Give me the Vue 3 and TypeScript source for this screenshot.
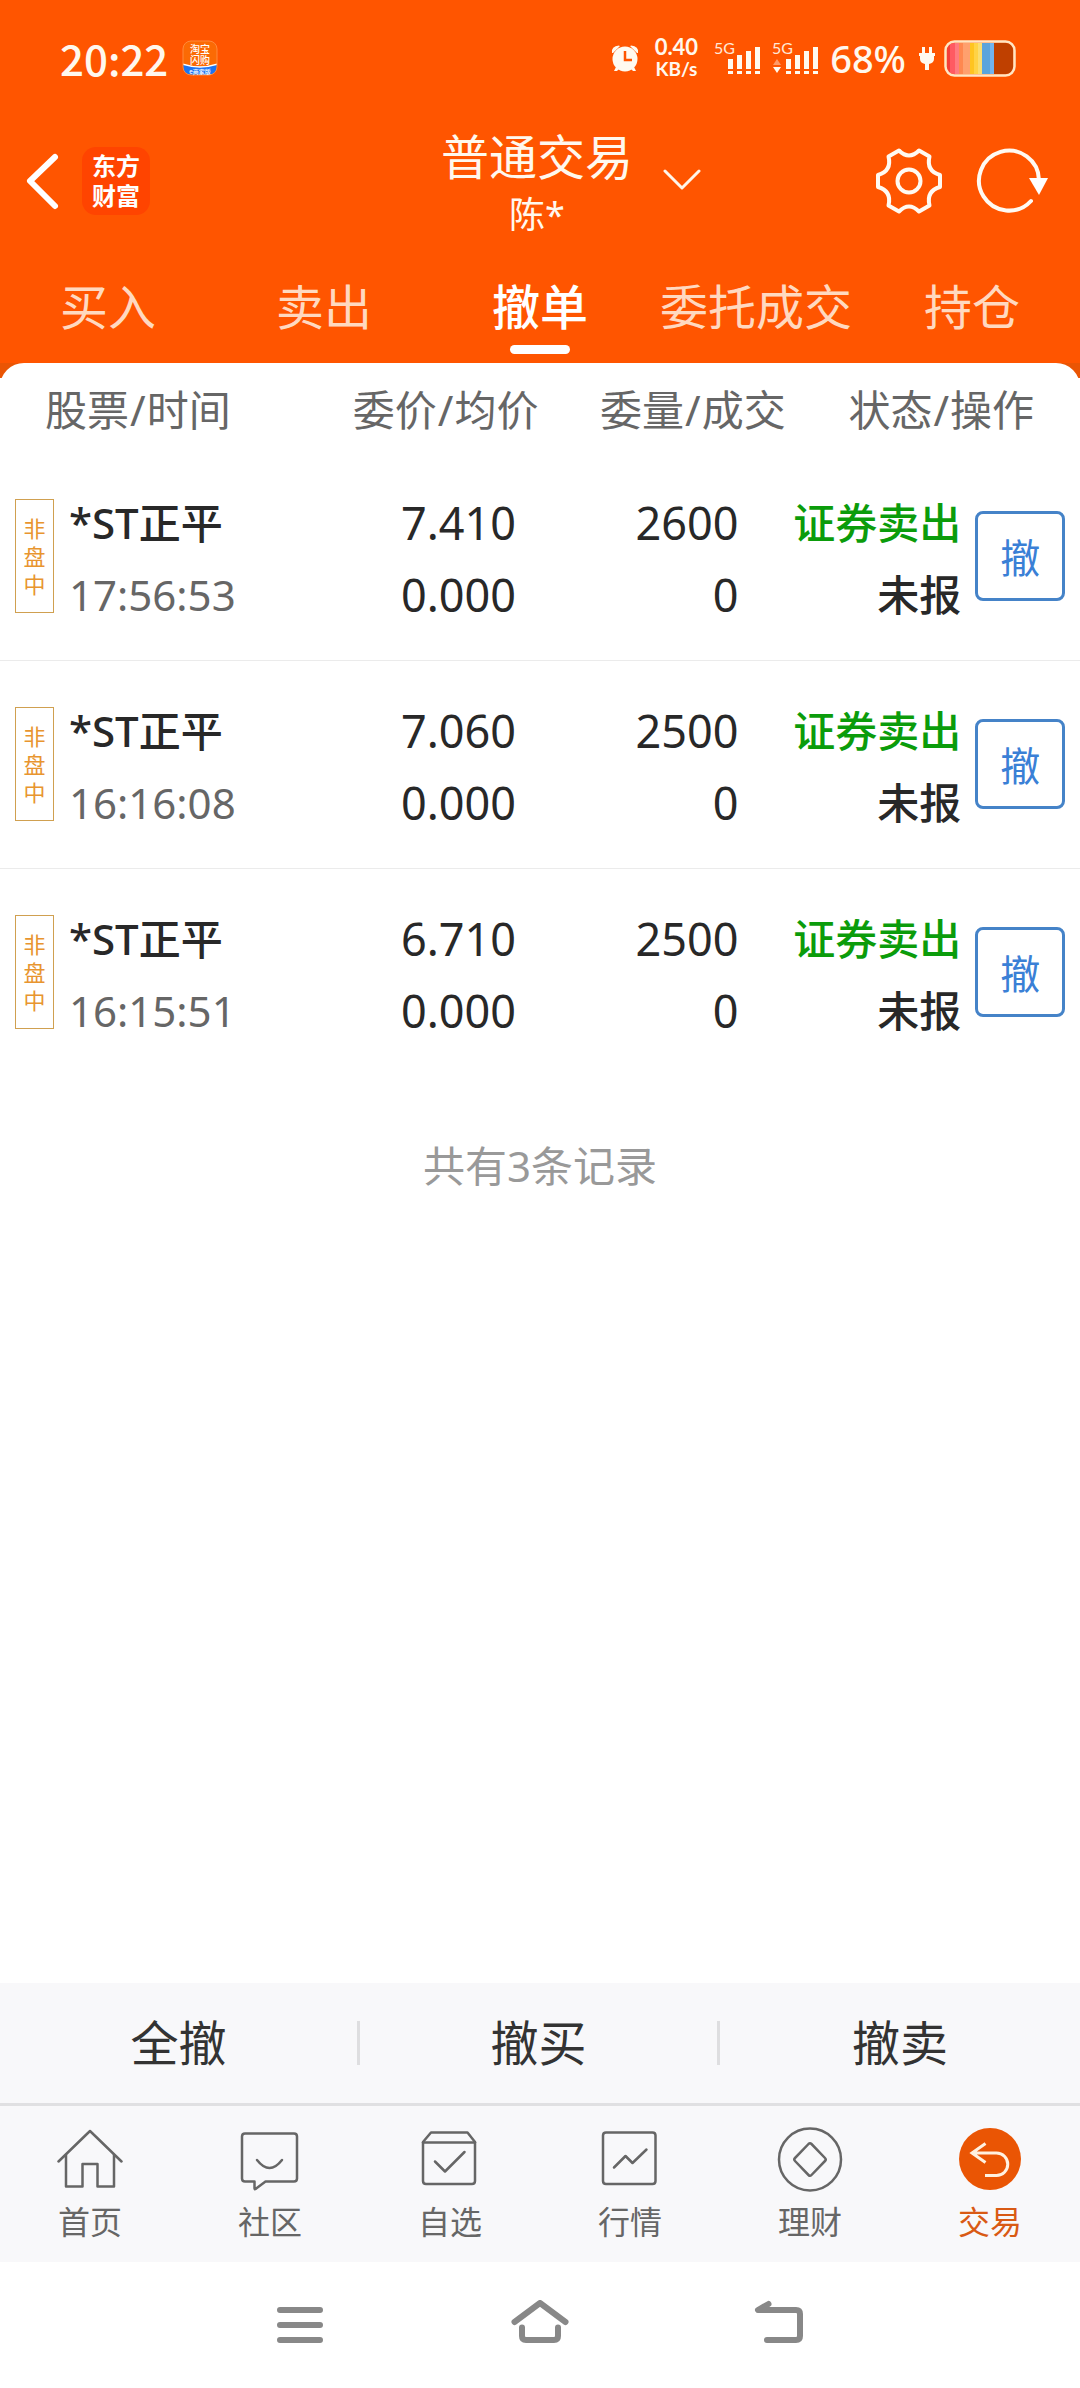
<script setup lang="ts">
import { ref } from 'vue'

interface Order {
  name: string
  time: string
  price: string
  avgPrice: string
  amount: string
  filled: string
  side: string
  status: string
}

const tabs: string[] = ['买入', '卖出', '撤单', '委托成交', '持仓']
const activeTab = ref<string>('撤单')

const columns: string[][] = [
  ['股票', '时间'],
  ['委价', '均价'],
  ['委量', '成交'],
  ['状态', '操作'],
]

const orders: Order[] = [
  { name: '*ST正平', time: '17:56:53', price: '7.410', avgPrice: '0.000', amount: '2600', filled: '0', side: '证券卖出', status: '未报' },
  { name: '*ST正平', time: '16:16:08', price: '7.060', avgPrice: '0.000', amount: '2500', filled: '0', side: '证券卖出', status: '未报' },
  { name: '*ST正平', time: '16:15:51', price: '6.710', avgPrice: '0.000', amount: '2500', filled: '0', side: '证券卖出', status: '未报' },
]

const actions: string[] = ['全撤', '撤买', '撤卖']

interface NavItem {
  label: string
  paths: string[]
}

const navItems: NavItem[] = [
  { label: '首页', paths: ['M1.5 35.5L33 5l31.5 30.5', 'M9 29v31.5h16.5V38h15v22.5H57V29'] },
  {
    label: '社区',
    paths: [
      'M8 7.5h49q3 0 3 3v42q0 3-3 3H28.500l-10 7.500q-1 .5-1-1V55.500H8q-3 0-3-3v-42q0-3 3-3z',
      'M20 34q12.500 16 25 0',
    ],
  },
  {
    label: '自选',
    paths: [
      'M6 16l8-9.500h36.500L58 16v39q0 3-3 3H9q-3 0-3-3z',
      'M6 16.500h52',
      'M18 35.500l10 10L47.500 26',
    ],
  },
  {
    label: '行情',
    paths: ['M9 6.500h46.500q3 0 3 3V55q0 3-3 3H9q-3 0-3-3V9.500q0-3 3-3z', 'M17 41.500L28.500 30l7 7L49.500 23.500'],
  },
  {
    label: '理财',
    paths: [
      'M33 2.500a31 31 0 1 1 0 62a31 31 0 1 1 0-62z',
      'M31.500 18q1.500-1.500 3 0l13.500 14q1.500 1.500 0 3l-13.500 14q-1.500 1.500-3 0L18 35q-1.500-1.500 0-3z',
    ],
  },
]

const bars: number[][] = [
  [14, 19],
  [23, 15],
  [32, 11],
  [41, 7],
]
</script>

<template>
  <div class="app">
    <header class="top">
      <div class="status-bar">
        <span class="clock">20:22</span>
        <svg class="app-badge" width="36" height="36" viewBox="0 0 36 36" aria-hidden="true">
          <defs>
            <clipPath id="badgeClip"><rect x="1" y="1" width="34" height="34" rx="8" /></clipPath>
          </defs>
          <g clip-path="url(#badgeClip)">
            <rect width="36" height="36" fill="#fb6a04" />
            <path d="M0 24q18 6 36 0v12H0z" fill="#1f74f0" />
            <path d="M0 24q18 6 36 0" fill="none" stroke="#fff" stroke-width="1.500" />
          </g>
          <rect x="1" y="1" width="34" height="34" rx="8" fill="none" stroke="#ff8a3c" stroke-width="1" />
          <text x="18" y="13" font-size="10" font-weight="500" fill="#fff" text-anchor="middle">淘宝</text>
          <text x="18" y="24" font-size="10" font-weight="500" fill="#fff" text-anchor="middle">闪购</text>
          <text x="18" y="34" font-size="6" font-weight="500" fill="#fff" text-anchor="middle">e商家版</text>
        </svg>
        <div class="status-right">
          <svg width="28" height="28" viewBox="0 0 28 28" aria-hidden="true">
            <g fill="#fffaf0">
              <circle cx="14" cy="15" r="12.500" />
              <path d="M1 9Q0 2 8 1.500q1 .5.500 1L2 9z" />
              <path d="M27 9q1-7-7-7.500-1 .5-.5 1L26 9z" />
              <path d="M5 23l-2 4h3l2-2zM23 23l2 4h-3l-2-2z" />
            </g>
            <path d="M14 7v9h7" fill="none" stroke="#ff5500" stroke-width="2.500" />
          </svg>
          <div class="speed">
            <span class="speed-num">0.40</span>
            <span class="speed-unit">KB/s</span>
          </div>
          <svg v-for="n in 2" :key="n" class="signal" width="46" height="36" viewBox="0 0 46 36" aria-hidden="true">
            <text x="0" y="14" font-size="16" fill="#ffe9d8">5G</text>
            <g fill="#fffaf0">
              <template v-for="bar in bars" :key="bar[0]">
                <rect :x="bar[0]" :y="bar[1]" width="5" :height="29 - bar[1]" />
                <rect :x="bar[0]" y="31" width="5" height="3" />
              </template>
            </g>
            <template v-if="n === 2">
              <path d="M1 25l4-6 4 6z" fill="#ff9a66" />
              <path d="M1 27l4 6 4-6z" fill="#fffaf0" />
            </template>
          </svg>
          <span class="percent">68%</span>
          <svg width="18" height="24" viewBox="0 0 18 24" aria-hidden="true">
            <path d="M4 1h3v6h4V1h3v6h3v3h-1v3q0 4-5 5v6H7v-6q-5-1-5-5v-3H1V7h3z" fill="#fffaf0" />
          </svg>
          <svg class="battery" width="72" height="37" viewBox="0 0 72 37" aria-hidden="true">
            <defs>
              <clipPath id="cellClip"><rect x="3" y="3" width="66" height="31" rx="7" /></clipPath>
            </defs>
            <g clip-path="url(#cellClip)">
              <rect x="2" y="2" width="5" height="33" fill="#f43e3a" />
              <rect x="6" y="2" width="5" height="33" fill="#ff5a62" />
              <rect x="11" y="2" width="4" height="33" fill="#ff7b80" />
              <rect x="15" y="2" width="4" height="33" fill="#ff8850" />
              <rect x="19" y="2" width="7" height="33" fill="#ffa06e" />
              <rect x="26" y="2" width="4" height="33" fill="#ffc420" />
              <rect x="30" y="2" width="4" height="33" fill="#ffd345" />
              <rect x="34" y="2" width="4" height="33" fill="#fade70" />
              <rect x="38" y="2" width="8" height="33" fill="#5aa4dc" />
              <rect x="46" y="2" width="4" height="33" fill="#72b4ee" />
              <rect x="50" y="2" width="20" height="33" fill="#bf4000" />
            </g>
            <rect x="1.500" y="1.500" width="69" height="34" rx="9" fill="none" stroke="#ffe6c4" stroke-width="2.500" />
          </svg>
        </div>
      </div>

      <div class="title-bar">
        <div class="title-left">
          <button class="icon-btn" type="button" aria-label="返回">
            <svg width="36" height="60" viewBox="0 0 36 60" fill="none" stroke="#fff" stroke-width="6" stroke-linecap="round" stroke-linejoin="round">
              <path d="M31 6L6 30l25 25" />
            </svg>
          </button>
          <div class="brand"><span>东方</span><span>财富</span></div>
        </div>
        <button class="account" type="button">
          <span class="account-text">
            <span class="account-type">普通交易</span>
            <span class="account-name">陈*</span>
          </span>
          <svg class="caret" width="38" height="22" viewBox="0 0 38 22" fill="none" stroke="#fff6ea" stroke-width="3" stroke-linecap="round" stroke-linejoin="round">
            <path d="M2 2l17 17L36 2" />
          </svg>
        </button>
        <div class="title-right">
          <button class="icon-btn" type="button" aria-label="设置">
            <svg width="70" height="70" viewBox="-35 -35 70 70" fill="none" stroke="#fffaf2" stroke-width="4" stroke-linejoin="round">
              <path d="M-10 -30.500Q0 -20.500 10 -30.500L20.500 -24.500Q17 -10 31 -6V6Q17 10 20.500 24.500L10 30.500Q0 20.500 -10 30.500L-20.500 24.500Q-17 10 -31 6V-6Q-17 -10 -20.500 -24.500Z" />
              <circle r="11.500" />
            </svg>
          </button>
          <button class="icon-btn" type="button" aria-label="刷新">
            <svg width="74" height="70" viewBox="-33 -35 74 70" fill="none" stroke="#fffaf2" stroke-width="4" stroke-linecap="round">
              <path d="M22 20A30 30 0 1 1 30 -1" />
              <path d="M20 -3h19L30 14z" fill="#fff" stroke="none" />
            </svg>
          </button>
        </div>
      </div>

      <nav class="tabs">
        <button v-for="tab in tabs" :key="tab" type="button" class="tab" :class="{ active: tab === activeTab }" @click="activeTab = tab">
          {{ tab }}
        </button>
      </nav>
    </header>

    <main class="content">
      <div class="sheet">
        <table class="orders">
          <colgroup>
            <col class="col-stock" />
            <col class="col-price" />
            <col class="col-amount" />
            <col class="col-status" />
            <col class="col-action" />
          </colgroup>
          <thead>
            <tr>
              <th v-for="(col, i) in columns" :key="i" scope="col" :colspan="i === 3 ? 2 : 1">
                {{ col[0] }}<span class="slash">/</span>{{ col[1] }}
              </th>
            </tr>
          </thead>
          <tbody>
            <tr v-for="order in orders" :key="order.time">
              <td>
                <div class="stock">
                  <span class="flag">非盘中</span>
                  <div class="lines left">
                    <span>{{ order.name }}</span>
                    <span class="time">{{ order.time }}</span>
                  </div>
                </div>
              </td>
              <td class="price">
                <div class="lines num"><span>{{ order.price }}</span><span>{{ order.avgPrice }}</span></div>
              </td>
              <td class="amount">
                <div class="lines num"><span>{{ order.amount }}</span><span>{{ order.filled }}</span></div>
              </td>
              <td>
                <div class="lines"><span class="sell">{{ order.side }}</span><span>{{ order.status }}</span></div>
              </td>
              <td class="action"><button class="cancel" type="button">撤</button></td>
            </tr>
          </tbody>
        </table>
        <p class="summary">共有3条记录</p>
      </div>
    </main>

    <footer>
      <div class="actions">
        <button v-for="action in actions" :key="action" type="button">{{ action }}</button>
      </div>
      <nav class="bottom-nav">
        <a v-for="item in navItems" :key="item.label" href="#">
          <svg width="66" height="66" viewBox="0 0 66 66" fill="none" stroke="#666" stroke-width="2.500" stroke-linecap="round" stroke-linejoin="round">
            <path v-for="d in item.paths" :key="d" :d="d" />
          </svg>
          <span>{{ item.label }}</span>
        </a>
        <a href="#" class="current">
          <svg width="66" height="66" viewBox="0 0 66 66" fill="none" stroke="#fff1e0" stroke-width="3">
            <circle cx="33" cy="33" r="31" fill="#ea5504" stroke="none" />
            <path d="M28.500 17.500L15 27l13.500 9.500M15 27h24.500a11 11 0 0 1 0 22.500H28" />
          </svg>
          <span>交易</span>
        </a>
      </nav>
      <div class="system-nav">
        <button type="button" aria-label="最近任务">
          <svg width="60" height="50" viewBox="0 0 60 50" stroke="#888" stroke-width="6" stroke-linecap="round">
            <path d="M10 10h40M10 25h40M10 40h40" />
          </svg>
        </button>
        <button type="button" aria-label="主屏幕">
          <svg width="60" height="50" viewBox="0 0 60 50" fill="none" stroke="#888" stroke-width="6" stroke-linecap="round" stroke-linejoin="round">
            <path d="M4.500 22L30 3l25.500 19M12 27.500V36q0 4 4 4h28q4 0 4-4v-8.500" />
          </svg>
        </button>
        <button type="button" aria-label="返回上一级">
          <svg width="60" height="50" viewBox="0 0 60 50" fill="none" stroke="#888" stroke-width="6" stroke-linecap="round" stroke-linejoin="round">
            <path d="M18.500 4L8 10h38q4 0 4 4v22q0 4-4 4H17" />
          </svg>
        </button>
      </div>
    </footer>
  </div>
</template>

<style>
body {
  background: #fff;
}
</style>

<style scoped>
.app {
  display: flex;
  flex-direction: column;
  min-height: 100vh;
  background: #fff;
  color: #282828;
  font-family: 'Noto Sans', 'Noto Sans CJK SC', sans-serif;
  font-size: 42px;
}

button {
  padding: 0;
  border: 0;
  background: none;
  color: inherit;
  font: inherit;
  cursor: pointer;
}

svg {
  display: block;
  flex: none;
}

.top {
  background: #ff5500;
  color: #fff8ee;
}

.status-bar {
  display: flex;
  align-items: center;
  box-sizing: border-box;
  height: 118px;
  padding: 0 64px 2px 60px;
}

.clock {
  font-family: 'Noto Sans CJK SC', sans-serif;
  font-weight: 500;
  font-size: 42px;
  line-height: 60px;
}

.app-badge {
  margin-left: 14px;
  font-family: 'Noto Sans CJK SC', sans-serif;
}

.signal {
  overflow: visible;
  font-family: Lato, sans-serif;
}

.status-right {
  display: flex;
  align-items: center;
  gap: 12px;
  margin-left: auto;
}

.speed {
  display: flex;
  flex-direction: column;
  align-items: center;
  margin: 0 4px;
  font-family: Lato, sans-serif;
  font-weight: 700;
  line-height: 22px;
}

.speed-num {
  font-size: 22px;
}

.speed-unit {
  font-size: 19px;
}

.percent {
  font-size: 38px;
  font-weight: 500;
  line-height: 60px;
}

.battery {
  margin-left: -4px;
}

.title-bar {
  display: grid;
  grid-template-columns: 1fr auto 1fr;
  align-items: center;
  height: 126px;
  padding: 0 30px 0 24px;
}

.title-left {
  display: flex;
  align-items: center;
  gap: 22px;
}

.brand {
  display: flex;
  flex-direction: column;
  padding: 4px 10px;
  border-radius: 14px;
  background: #ff4400;
  color: #fff;
  font-size: 24px;
  font-weight: 700;
  line-height: 30px;
}

.account {
  position: relative;
}

.account-text {
  display: flex;
  flex-direction: column;
  align-items: center;
}

.account-type {
  font-size: 48px;
  line-height: 68px;
}

.account-name {
  font-size: 36px;
  line-height: 48px;
}

.caret {
  position: absolute;
  left: 100%;
  top: 46px;
  margin-left: 30px;
}

.title-right {
  display: flex;
  justify-content: flex-end;
  gap: 32px;
}

.tabs {
  display: grid;
  grid-template-columns: repeat(5, 1fr);
  height: 119px;
}

.tab {
  display: flex;
  flex-direction: column;
  align-items: center;
  justify-content: flex-end;
  gap: 5px;
  padding-bottom: 9px;
  color: #ffd9c0;
  font-size: 48px;
  line-height: 66px;
}

.tab::after {
  content: '';
  width: 60px;
  height: 9px;
  border-radius: 5px;
}

.tab.active {
  color: #fff;
  font-weight: 500;
}

.tab.active::after {
  background: #fff;
}

.content {
  flex: 1;
  background: linear-gradient(#ea5504 15px, #fff 15px);
}

.sheet {
  border-radius: 24px 24px 0 0;
  background: #fff;
}

.orders {
  width: 100%;
  table-layout: fixed;
  border-collapse: collapse;
}

.col-stock {
  width: 31%;
}

.col-price {
  width: 19%;
}

.col-amount {
  width: 23%;
}

.col-status {
  width: 16%;
}

.col-action {
  width: 11%;
}

th {
  height: 84px;
  padding: 5px 0 0;
  color: #666;
  font-weight: 400;
  line-height: 60px;
  text-align: left;
  white-space: nowrap;
}

th:nth-child(1) {
  padding-left: 45px;
}

th:nth-child(2) {
  padding-left: 18px;
}

th:nth-child(3),
th:nth-child(4) {
  padding-left: 60px;
}

.slash {
  margin: 0 1px;
}

td {
  height: 208px;
  box-sizing: border-box;
  padding: 0;
}

tbody tr:not(:last-child) {
  border-bottom: 1px solid #ebebeb;
}

.stock {
  display: flex;
  align-items: center;
  gap: 15px;
  padding-left: 15px;
}

.flag {
  box-sizing: border-box;
  width: 39px;
  height: 114px;
  padding: 14px 7px;
  border: 1px solid #d0a050;
  color: #e8952f;
  font-size: 22px;
  line-height: 28px;
  text-align: center;
  word-break: break-all;
}

.lines {
  display: flex;
  flex-direction: column;
  padding-top: 6px;
  line-height: 72px;
  text-align: right;
  white-space: nowrap;
  font-weight: 500;
}

.lines.left {
  text-align: left;
}

.lines.num {
  font-size: 45px;
  font-weight: 400;
}

.time {
  color: #666;
  font-weight: 400;
}

.price .lines {
  padding-right: 24px;
}

.amount .lines {
  padding-right: 50px;
}

.sell {
  color: #0b9c0b;
}

.action {
  padding-left: 14px;
}

.cancel {
  display: block;
  box-sizing: border-box;
  width: 90px;
  height: 90px;
  border: 3px solid #4583c8;
  border-radius: 8px;
  color: #3a80d6;
  font-size: 40px;
}

.summary {
  margin: 0;
  padding: 60px 0;
  color: #999;
  line-height: 60px;
  text-align: center;
}

.actions {
  display: grid;
  grid-template-columns: repeat(3, 1fr);
  align-items: center;
  height: 120px;
  border-bottom: 3px solid #e0e0e2;
  background: #f8f8fa;
}

.actions button {
  height: 44px;
  color: #333;
  font-size: 48px;
  line-height: 44px;
}

.actions button:not(:last-child) {
  border-right: 3px solid #dedee0;
}

.bottom-nav {
  display: grid;
  grid-template-columns: repeat(6, 1fr);
  padding: 20px 0;
  background: #f8f8fa;
}

.bottom-nav a {
  display: flex;
  flex-direction: column;
  align-items: center;
  gap: 10px;
  color: #666;
  font-size: 32px;
  line-height: 40px;
  text-decoration: none;
}

.bottom-nav a.current {
  color: #d95a14;
}

.system-nav {
  display: grid;
  grid-template-columns: repeat(3, 1fr);
  height: 126px;
  padding: 0 calc(100% / 6);
  background: #fff;
}

.system-nav button {
  display: flex;
  align-items: center;
  justify-content: center;
}
</style>
